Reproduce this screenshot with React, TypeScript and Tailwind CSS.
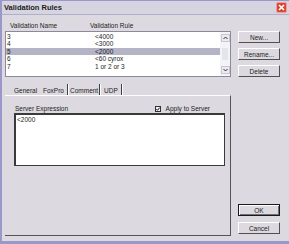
import React from "react";

const rules = [
  { name: "3", rule: "<4000" },
  { name: "4", rule: "<3000" },
  { name: "5", rule: "<2000", selected: true },
  { name: "6", rule: "<60 cyrox" },
  { name: "7", rule: "1 or 2 or 3" },
];

function Btn({ label, isDefault }: { label: string; isDefault?: boolean }) {
  return (
    <div
      className={
        "h-[12px] w-[42px] flex items-center justify-center leading-[7px] " +
        (isDefault
          ? "border border-[#1a1a1a] shadow-[inset_1px_1px_0_#fff,inset_-1px_-1px_0_#707070]"
          : "border-t border-l border-t-white border-l-white border-r border-b border-r-[#505050] border-b-[#505050]")
      }
    >
      {label}
    </div>
  );
}

function Sep() {
  return <div className="w-[2px] h-[11px] border-l border-l-[#404040] border-r border-r-white" />;
}

export default function App() {
  return (
    <div
      className="w-[289px] h-[244px] flex flex-col bg-[#dcdae0] text-[#1c1c1c] text-[6.5px] border-l-2 border-b-[3px] border-t border-[#9a98c8] overflow-hidden"
      style={{ fontFamily: '"Liberation Sans", Arial, sans-serif' }}
    >
      {/* title bar */}
      <div className="h-[14px] flex items-center justify-between pl-[2px] pr-[2px] bg-[#d6d4e0] border-b border-[#b0aec8]">
        <span className="font-bold text-[7.5px] leading-[8px]">Validation Rules</span>
        <div className="w-[11px] h-[11px] rounded-[2px] bg-[#d8463a] border border-[#f0a090] flex items-center justify-center">
          <svg width="7" height="7" viewBox="0 0 7 7">
            <path d="M1 1 L6 6 M6 1 L1 6" stroke="#fff" strokeWidth="1.6" />
          </svg>
        </div>
      </div>

      {/* body */}
      <div className="flex-1 flex pl-[3px]">
        {/* left column */}
        <div className="w-[226px] flex flex-col">
          <div className="flex pt-[7px] pb-[2px] leading-[7px]">
            <span className="w-[85px] pl-[5px]">Validation Name</span>
            <span>Validation Rule</span>
          </div>

          {/* list */}
          <div className="h-[46px] bg-white border border-[#8a8a9a] flex">
            <div className="flex-1 pt-[0.5px]">
              {rules.map((r) => (
                <div
                  key={r.name}
                  className={"h-[7.5px] flex items-center leading-[7px] " + (r.selected ? "bg-[#b4b4c6]" : "")}
                >
                  <span className="w-[89px] pl-[1px]">{r.name}</span>
                  <span>{r.rule}</span>
                </div>
              ))}
            </div>
            <div className="w-[10px] flex flex-col items-center py-[2px] bg-[#f4f4f6]">
              <div className="w-[9px] h-[8px] border border-[#c8c8d4] bg-[#eceaf0] flex items-center justify-center">
                <svg width="5" height="4" viewBox="0 0 5 4">
                  <path d="M0.5 3 L2.5 1 L4.5 3" stroke="#303040" strokeWidth="1" fill="none" />
                </svg>
              </div>
              <div className="flex-1 w-[6px] my-[6px] bg-[#e4e4ec]" />
              <div className="w-[9px] h-[8px] border border-[#c8c8d4] bg-[#eceaf0] flex items-center justify-center">
                <svg width="5" height="4" viewBox="0 0 5 4">
                  <path d="M0.5 1 L2.5 3 L4.5 1" stroke="#303040" strokeWidth="1" fill="none" />
                </svg>
              </div>
            </div>
          </div>

          {/* tabs */}
          <div className="mt-[7px] h-[11px] flex items-end leading-[7px]">
            <span className="ml-[9px] w-[29px] pb-[1px]">General</span>
            <span className="w-[24px] pb-[1px]">FoxPro</span>
            <Sep />
            <span className="ml-[1px] w-[29px] pb-[1px]">Comment</span>
            <Sep />
            <span className="ml-[3px] w-[17px] pb-[1px]">UDP</span>
            <Sep />
          </div>

          {/* panel */}
          <div className="h-[141px] border-t border-t-white border-r border-r-[#555] border-b border-b-[#555] pl-[9px] pt-[9px] flex flex-col">
            <div className="flex justify-between leading-[7px] pr-[20px]">
              <span className="ml-[1px]">Server Expression</span>
              <span className="flex items-center gap-[5px]">
                <span className="w-[6px] h-[6px] border border-[#303030] bg-[#f4f4f4] flex items-center justify-center">
                  <svg width="4" height="4" viewBox="0 0 4 4">
                    <path d="M0.3 2 L1.5 3.3 L3.7 0.6" stroke="#111" strokeWidth="1" fill="none" />
                  </svg>
                </span>
                Apply to Server
              </span>
            </div>
            <div className="mt-[1px] w-[211px] h-[53px] bg-white border-t-2 border-l-2 border-t-[#3a3a3a] border-l-[#3a3a3a] border-r border-b border-r-[#3a3a3a] border-b-[#3a3a3a] pl-[1px] pt-[1px] leading-[7px]">
              &lt;2000
            </div>
          </div>
        </div>

        {/* right column */}
        <div className="ml-[7px] flex flex-col pt-[16px] pb-[7px]">
          <div className="flex flex-col gap-[5px]">
            <Btn label="New..." />
            <Btn label="Rename..." />
            <Btn label="Delete" />
          </div>
          <div className="mt-auto flex flex-col gap-[6px]">
            <Btn label="OK" isDefault />
            <Btn label="Cancel" />
          </div>
        </div>
      </div>
    </div>
  );
}
